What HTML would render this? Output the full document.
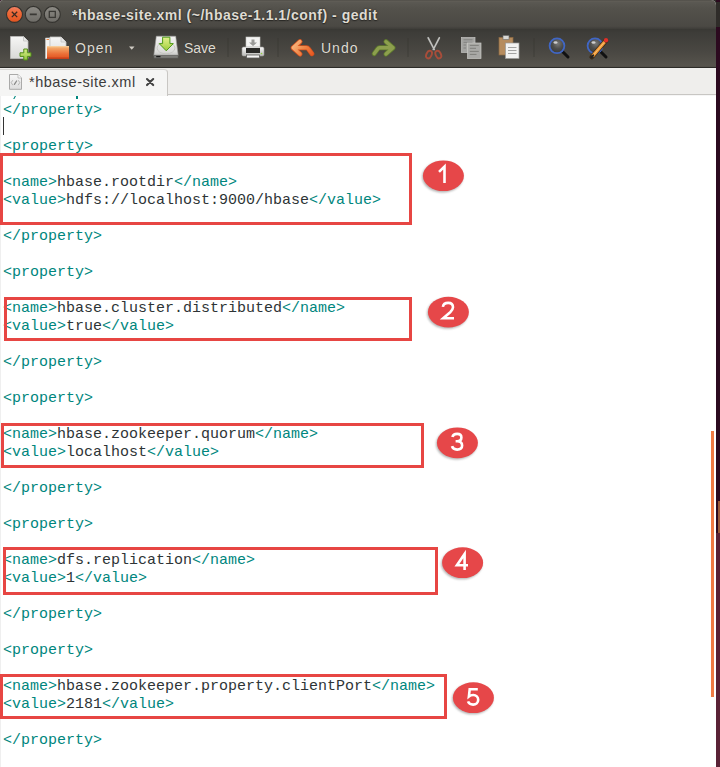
<!DOCTYPE html>
<html><head><meta charset="utf-8">
<style>
*{margin:0;padding:0;box-sizing:border-box}
html,body{width:720px;height:767px;overflow:hidden;background:#2c0a1f}
body{position:relative;font-family:"Liberation Sans",sans-serif}
.abs{position:absolute}
#strip1{left:700px;top:0;width:20px;height:27px;background:#2f2c29}
#strip0{left:716px;top:0;width:4px;height:2px;background:#2c0a1f}
#strip0b{left:0;top:0;width:6px;height:6px;background:#2c0a1f}
#strip2{left:716px;top:27px;width:4px;height:474px;background:#2c0a1f}
#strip3{left:716px;top:501px;width:4px;height:32px;background:#2c0a1f}
#strip3b{left:718px;top:501px;width:2px;height:32px;background:#9a5a3a}
#strip4{left:716px;top:533px;width:4px;height:234px;background:#5a2236}
#win{left:0;top:0;width:716px;height:767px;overflow:hidden;border-radius:3px 5px 0 0;background:#fff}
#title{left:0;top:0;width:716px;height:29px;background:linear-gradient(#4a4843,#615e57 1px,#5a5852 2.5px,#53514b 30%,#4b4944 90%,#3e3d39)}
#toolbar{left:0;top:29px;width:716px;height:39px;background:linear-gradient(#393834,#3d3c38 8%,#4a4843 60%,#57544d 96%,#2c2b27 97.5%)}
#tabbar{left:0;top:68px;width:716px;height:27px;background:#efeeec;border-bottom:1px solid #c8c6c3}
#tabline{left:0;top:95px;width:716px;height:1px;background:#f6f6f6}
#tab{left:0;top:69px;width:168px;height:27px;background:#f5f5f4;border-right:1px solid #c8c6c3;border-top:1px solid #d6d5d2;border-radius:0 4px 0 0}
.wbtn{width:16px;height:16px;border-radius:50%;top:6px}
#close{left:6.5px;background:radial-gradient(circle at 50% 30%,#f58a5c,#e9541f 70%);border:1px solid #2e2d2a}
#min{left:25.5px;background:linear-gradient(#8e8c86,#6c6a65);border:1px solid #2e2d2a}
#max{left:44.5px;background:linear-gradient(#8e8c86,#6c6a65);border:1px solid #2e2d2a}
#ttl{left:72px;top:7px;font-weight:bold;font-size:14px;letter-spacing:0.5px;color:#dfdbd2;text-shadow:0 0 2px #2a2926,0 1px 1px #2a2926;white-space:nowrap}
.tbt{font-size:14px;color:#dfdbd2;white-space:nowrap;top:40px;text-shadow:0 0 1px #2e2d29}
#editor{left:0;top:96px;width:716px;height:671px;overflow:hidden;background:#fff}
#gut{left:0;top:0;width:1px;height:672px;background:#efefef}
pre{position:absolute;left:3px;top:-12px;font-family:"Liberation Mono",monospace;font-size:15px;line-height:18px;color:#2e3436}
.t{color:#00867d}
.box{position:absolute;border:3px solid #e74643}
.num{position:absolute;width:41px;height:31px;border-radius:50%;background:#e2474b;color:#fff;font-size:21px;text-align:center;line-height:31px;box-shadow:-1px 2px 2px rgba(0,0,0,0.35)}
#scroll{left:711px;top:431px;width:3px;height:266px;background:#f07b44}
#cursor{left:3px;top:117px;width:1px;height:18px;background:#333}
</style></head><body>
<div class="abs" id="strip0b"></div>
<div class="abs" id="strip1"></div>
<div class="abs" id="strip0"></div>
<div class="abs" id="strip2"></div>
<div class="abs" id="strip3"></div>
<div class="abs" id="strip3b"></div>
<div class="abs" id="strip4"></div>
<div class="abs" id="win">
  <div class="abs" id="title"></div>
  <div class="abs" id="ttl">*hbase-site.xml (~/hbase-1.1.1/conf) - gedit</div>
  <div class="abs" id="toolbar"></div>
  <div class="abs tbt" style="left:75px;letter-spacing:1px">Open</div>
  <div class="abs tbt" style="left:184px">Save</div>
  <div class="abs tbt" style="left:321px;letter-spacing:1px">Undo</div>

  <svg class="abs" style="left:0;top:0" width="716" height="68" viewBox="0 0 716 68">
    <defs>
      <linearGradient id="gPage" x1="0" y1="0" x2="0" y2="1"><stop offset="0" stop-color="#f6f6f5"/><stop offset="1" stop-color="#d9d9d7"/></linearGradient>
      <linearGradient id="gGreen" x1="0" y1="0" x2="0" y2="1"><stop offset="0" stop-color="#d8ee88"/><stop offset="1" stop-color="#94c440"/></linearGradient>
      <linearGradient id="gFolder" x1="0" y1="0" x2="0" y2="1"><stop offset="0" stop-color="#f9d8a8"/><stop offset="0.15" stop-color="#f3a868"/><stop offset="0.6" stop-color="#ec7038"/><stop offset="1" stop-color="#e0501c"/></linearGradient>
      <linearGradient id="gDrive" x1="0" y1="0" x2="0" y2="1"><stop offset="0" stop-color="#f2f2f1"/><stop offset="0.8" stop-color="#dcdcda"/><stop offset="1" stop-color="#c4c4c2"/></linearGradient>
      <linearGradient id="gPrint" x1="0" y1="0" x2="0" y2="1"><stop offset="0" stop-color="#fafafa"/><stop offset="1" stop-color="#b9b9b6"/></linearGradient>
      <linearGradient id="gUndo" gradientUnits="userSpaceOnUse" x1="293" y1="41" x2="312" y2="55"><stop offset="0" stop-color="#f8c08a"/><stop offset="0.5" stop-color="#f08a4a"/><stop offset="1" stop-color="#e85a22"/></linearGradient>
      <linearGradient id="gRedo" x1="0" y1="0" x2="0" y2="1"><stop offset="0" stop-color="#8eaa55"/><stop offset="1" stop-color="#6a8a38"/></linearGradient>
      <linearGradient id="gClose" x1="0" y1="0" x2="0" y2="1"><stop offset="0" stop-color="#f3836a"/><stop offset="0.35" stop-color="#ef6b3a"/><stop offset="1" stop-color="#e25420"/></linearGradient>
      <linearGradient id="gBtn" x1="0" y1="0" x2="0" y2="1"><stop offset="0" stop-color="#8d8b85"/><stop offset="1" stop-color="#6e6c67"/></linearGradient>
      <linearGradient id="gGreen2" x1="0" y1="0" x2="0" y2="1"><stop offset="0" stop-color="#e2f08e"/><stop offset="0.5" stop-color="#c2e064"/><stop offset="1" stop-color="#98c83a"/></linearGradient>
      <radialGradient id="gGlass" cx="0.55" cy="0.35" r="0.7"><stop offset="0" stop-color="#7a7a78"/><stop offset="0.5" stop-color="#4d4d4b"/><stop offset="1" stop-color="#383836"/></radialGradient>
    </defs>
    <!-- window buttons -->
    <circle cx="14.5" cy="14.4" r="8" fill="url(#gClose)" stroke="#34332f" stroke-width="1.1"/>
    <path d="M11.8 11.7 L17.2 17.1 M17.2 11.7 L11.8 17.1" stroke="#3a2a22" stroke-width="1.3"/>
    <circle cx="33.3" cy="14.4" r="8" fill="url(#gBtn)" stroke="#34332f" stroke-width="1.1"/>
    <path d="M29.8 14.4 H36.8" stroke="#3a3935" stroke-width="1.6"/>
    <circle cx="52.3" cy="14.4" r="8" fill="url(#gBtn)" stroke="#34332f" stroke-width="1.1"/>
    <rect x="49.3" y="11.4" width="6" height="6" fill="none" stroke="#3a3935" stroke-width="1.3"/>
    <!-- new -->
    <path d="M10.5 36.5 H23.5 L28 41 V58.5 H10.5 Z" fill="url(#gPage)" stroke="#bdbdbb" stroke-width="0.8"/>
    <path d="M23.5 36.5 V41 H28" fill="#e9e9e8" stroke="#c2c2c0" stroke-width="0.8"/>
    <path d="M23.8 49 h3.6 v3.8 h3.6 v3.6 h-3.6 v3.6 h-3.6 v-3.6 h-3.8 v-3.6 h3.8 z" fill="url(#gGreen)" stroke="#4f8a18" stroke-width="1"/>
    <!-- open -->
    <path d="M45.5 38 H50 V58.5 H45.5 Z" fill="#f3f3f2" stroke="#c9c9c7" stroke-width="0.6"/>
    <path d="M46.5 39.5 H49" stroke="#ef8a4a" stroke-width="1"/>
    <path d="M50 37 H61 L66 42 V58 H50 Z" fill="url(#gPage)" stroke="#c4c4c2" stroke-width="0.8"/>
    <path d="M61 37 V42 H66" fill="#e6e6e5" stroke="#c4c4c2" stroke-width="0.8"/>
    <path d="M47 46 H69 V59 H47 Z" fill="url(#gFolder)"/>
    <path d="M47 58.2 H69" stroke="#c8401a" stroke-width="1.4"/>
    <path d="M129 46.5 H134.5 L131.75 49.7 Z" fill="#cfcbc3"/>
    <!-- save -->
    <path d="M156.3 36.2 H175.7 L178.2 55.5 H153.8 Z" fill="url(#gDrive)" stroke="#9a9a97" stroke-width="0.6"/>
    <path d="M153.8 55.3 H178.2 V58.2 H153.8 Z" fill="#7c7c79" stroke="#4f4f4d" stroke-width="0.5"/>
    <path d="M156.2 56.6 H160.5" stroke="#1a1a1a" stroke-width="1.2"/>
    <ellipse cx="166" cy="48" rx="9" ry="5.8" fill="none" stroke="#c4c4c1" stroke-width="0.9"/>
    <path d="M162.6 37.2 H169.9 V43.6 H173.3 L166.25 50.8 L159.2 43.6 H162.6 Z" fill="url(#gGreen2)" stroke="#4f9a1a" stroke-width="1"/>
    <!-- separators -->
    <path d="M228 38 V57 M278 38 V57 M408 38 V57 M534 38 V57" stroke="#35342f" stroke-width="1" opacity="0.55"/>
    <!-- print -->
    <rect x="246" y="37" width="14" height="12" fill="#f4f4f3" stroke="#c6c6c4" stroke-width="0.6"/>
    <path d="M251.5 39.5 H254.5 V42.5 H257 L253 46 L249 42.5 H251.5 Z" fill="#9a9a98"/>
    <rect x="242" y="47" width="22" height="9" rx="1.5" fill="url(#gPrint)" stroke="#9c9c99" stroke-width="0.6"/>
    <rect x="246" y="48" width="14" height="5" fill="#2a2a28"/>
    <circle cx="261.5" cy="53.5" r="0.8" fill="#8fd23a"/>
    <rect x="246.5" y="55" width="13" height="3" fill="#f6f6f5" stroke="#5a5a58" stroke-width="0.8"/>
    <!-- undo -->
    <path d="M300 41.6 L293.2 47.8 L300 54 M293.2 47.8 H306.3 Q307.6 47.8 308.4 48.9 L311.8 53.6" fill="none" stroke="#d5501d" stroke-width="5" stroke-linecap="round" stroke-linejoin="round"/>
    <path d="M300 41.6 L293.2 47.8 L300 54 M293.2 47.8 H306.3 Q307.6 47.8 308.4 48.9 L311.8 53.6" fill="none" stroke="url(#gUndo)" stroke-width="3.4" stroke-linecap="round" stroke-linejoin="round"/>
    <!-- redo -->
    <path d="M386 41.7 L393 47.8 L386 54 M393 47.8 H379.8 Q378.5 47.8 377.7 48.9 L374.3 53.6" fill="none" stroke="#5e7a2c" stroke-width="5" stroke-linecap="round" stroke-linejoin="round"/>
    <path d="M386 41.7 L393 47.8 L386 54 M393 47.8 H379.8 Q378.5 47.8 377.7 48.9 L374.3 53.6" fill="none" stroke="#8d9f4e" stroke-width="3.4" stroke-linecap="round" stroke-linejoin="round"/>
    <!-- cut -->
    <path d="M428.2 37.8 L434.2 49.5 M439.3 37.8 L433.3 49.5" stroke="#5a5a58" stroke-width="2.6" stroke-linecap="round" opacity="0.5"/>
    <path d="M428.2 37.8 L434.2 49.5 M439.3 37.8 L433.3 49.5" stroke="#c2c2bf" stroke-width="1.6" stroke-linecap="round"/>
    <ellipse cx="429" cy="54.6" rx="2.6" ry="4" transform="rotate(25 429 54.6)" fill="none" stroke="#a84d3a" stroke-width="1.9"/>
    <ellipse cx="438.3" cy="54.6" rx="2.6" ry="4" transform="rotate(-25 438.3 54.6)" fill="none" stroke="#a84d3a" stroke-width="1.9"/>
    <!-- copy -->
    <rect x="461.5" y="37.5" width="13.5" height="15" fill="#a4a4a1" stroke="#c4c4c1" stroke-width="0.7"/>
    <path d="M463.5 39.8 H472.5 M463.5 42.3 H472.5 M463.5 45 H466 M463.5 48 H466" stroke="#7e7e7b" stroke-width="0.9"/>
    <rect x="467.5" y="43" width="13.5" height="15.5" fill="#a9a9a6" stroke="#cacac7" stroke-width="0.7"/>
    <path d="M469.8 45.4 H478.8 M469.8 48.3 H476 M469.8 51.4 H478.8 M469.8 54.4 H476.5" stroke="#7a7a77" stroke-width="0.9"/>
    <!-- paste -->
    <rect x="499" y="37.5" width="14" height="17.5" fill="#b68c5e" stroke="#8e6a42" stroke-width="0.7"/>
    <rect x="503" y="35.5" width="6" height="4" fill="#d8d8d5" stroke="#6a6a68" stroke-width="0.6"/>
    <rect x="505.5" y="43" width="13.5" height="15.5" fill="#f2f2f1" stroke="#9a9a98" stroke-width="0.7"/>
    <path d="M508 47.5 H516.5 M508 50.5 H516.5 M508 53.5 H516.5" stroke="#9a9a98" stroke-width="0.9"/>
    <!-- find -->
    <path d="M561.5 50.5 L568 57" stroke="#111" stroke-width="3" stroke-linecap="round"/>
    <circle cx="557" cy="45.8" r="7.4" fill="url(#gGlass)" stroke="#4066c4" stroke-width="1.8"/>
    <ellipse cx="555.5" cy="42.5" rx="2" ry="1.2" fill="#e8e8e8" opacity="0.8"/>
    <!-- replace -->
    <path d="M599.5 50.5 L606 57" stroke="#111" stroke-width="3" stroke-linecap="round"/>
    <circle cx="595" cy="45.8" r="7.4" fill="url(#gGlass)" stroke="#4066c4" stroke-width="1.8"/>
    <ellipse cx="593.5" cy="42.5" rx="2" ry="1.2" fill="#e8e8e8" opacity="0.8"/>
    <path d="M591.8 57 L606 40.5" stroke="#3a2a18" stroke-width="4.8" stroke-linecap="round"/>
    <path d="M592.6 56.1 L604.6 42" stroke="#f09a3a" stroke-width="3.2"/>
    <path d="M593.5 55 L604 42.6" stroke="#f8c070" stroke-width="1"/>
    <circle cx="606" cy="40.3" r="2.2" fill="#e0302a"/>
    <path d="M591.6 57.2 L593.2 55.3" stroke="#222" stroke-width="2" stroke-linecap="round"/>
  </svg>
  <div class="abs" id="tabbar"></div>
  <div class="abs" id="tabline"></div>
  <div class="abs" id="tab"></div>
  <svg class="abs" style="left:0;top:68px" width="30" height="28" viewBox="0 68 30 28">
    <defs><linearGradient id="gTi" x1="0" y1="0" x2="0" y2="1"><stop offset="0" stop-color="#f7f7f7"/><stop offset="1" stop-color="#dedede"/></linearGradient></defs>
    <path d="M9.5 74.5 H18 L21.5 78 V89.3 H9.5 Z" fill="url(#gTi)" stroke="#aaaaa9" stroke-width="1"/>
    <path d="M18 74.5 V78 H21.5" fill="#fbfbfb" stroke="#b5b5b4" stroke-width="0.8"/>
    <path d="M12.8 80.2 L11.2 82.6 L12.8 85.2 M18.2 80.2 L19.8 82.6 L18.2 85.2" fill="none" stroke="#b0b0af" stroke-width="0.9"/>
    <path d="M14.4 84.4 L16.6 81" stroke="#8a8a89" stroke-width="1.3" stroke-linecap="round"/>
  </svg>
  <div class="abs" style="left:29px;top:74px;font-size:14.5px;letter-spacing:0.5px;color:#3c3c3c">*hbase-site.xml</div>
  <svg class="abs" style="left:140px;top:72px" width="20" height="20" viewBox="140 72 20 20"><path d="M147 79 L153.2 85.1 M153.2 79 L147 85.1" stroke="#434343" stroke-width="2.1" stroke-linecap="round"/></svg>
  <div class="abs" id="editor">
    <div class="abs" id="gut"></div>
    <svg class="abs" style="left:0;top:0" width="100" height="4"><path d="M13.2 3 L14.8 0 H16 L14.4 3 Z" fill="#00867d"/><rect x="76" y="0" width="2" height="3" fill="#00867d"/></svg>
<pre>

<span class="t">&lt;/property&gt;</span>

<span class="t">&lt;property&gt;</span>

<span class="t">&lt;name&gt;</span>hbase.rootdir<span class="t">&lt;/name&gt;</span>
<span class="t">&lt;value&gt;</span>hdfs://localhost:9000/hbase<span class="t">&lt;/value&gt;</span>

<span class="t">&lt;/property&gt;</span>

<span class="t">&lt;property&gt;</span>

<span class="t">&lt;name&gt;</span>hbase.cluster.distributed<span class="t">&lt;/name&gt;</span>
<span class="t">&lt;value&gt;</span>true<span class="t">&lt;/value&gt;</span>

<span class="t">&lt;/property&gt;</span>

<span class="t">&lt;property&gt;</span>

<span class="t">&lt;name&gt;</span>hbase.zookeeper.quorum<span class="t">&lt;/name&gt;</span>
<span class="t">&lt;value&gt;</span>localhost<span class="t">&lt;/value&gt;</span>

<span class="t">&lt;/property&gt;</span>

<span class="t">&lt;property&gt;</span>

<span class="t">&lt;name&gt;</span>dfs.replication<span class="t">&lt;/name&gt;</span>
<span class="t">&lt;value&gt;</span>1<span class="t">&lt;/value&gt;</span>

<span class="t">&lt;/property&gt;</span>

<span class="t">&lt;property&gt;</span>

<span class="t">&lt;name&gt;</span>hbase.zookeeper.property.clientPort<span class="t">&lt;/name&gt;</span>
<span class="t">&lt;value&gt;</span>2181<span class="t">&lt;/value&gt;</span>

<span class="t">&lt;/property&gt;</span>
</pre>
  </div>
  <div class="abs" id="cursor"></div>
  <div class="abs" id="scroll"></div>
  <div class="box" style="left:0;top:153px;width:412px;height:72px"></div>
  <div class="box" style="left:4px;top:297px;width:408px;height:44px"></div>
  <div class="box" style="left:1px;top:423px;width:423px;height:45px"></div>
  <div class="box" style="left:3px;top:547px;width:435px;height:48px"></div>
  <div class="box" style="left:0;top:674px;width:447px;height:45px"></div>
  <svg class="abs" style="left:0;top:0" width="716" height="767" viewBox="0 0 716 767">
    <defs><filter id="sh" x="-20%" y="-20%" width="140%" height="140%"><feGaussianBlur stdDeviation="0.9"/></filter></defs>
    <ellipse cx="442.5" cy="177.05" rx="20.5" ry="15.35" fill="#555" opacity="0.45" filter="url(#sh)"/>
    <ellipse cx="443.4" cy="175.75" rx="20.5" ry="15.35" fill="#e64749"/>
    <path transform="translate(428 160)" d="M11 11.9 L16.5 6.6 V23.1" fill="none" stroke="#fff" stroke-width="2.6"/>
    <ellipse cx="447.5" cy="313.40000000000003" rx="20.5" ry="15.35" fill="#555" opacity="0.45" filter="url(#sh)"/>
    <ellipse cx="448.4" cy="312.1" rx="20.5" ry="15.35" fill="#e64749"/>
    <path transform="translate(432 296)" d="M10.9 10.9 C11.2 8.1 13.5 6.9 16.2 6.9 C19.1 6.9 21 8.7 21 11.3 C21 13.3 19.9 14.6 18.2 16.2 L11.2 22.3 H22" fill="none" stroke="#fff" stroke-width="2.6"/>
    <ellipse cx="456.5" cy="444.1" rx="20.5" ry="15.35" fill="#555" opacity="0.45" filter="url(#sh)"/>
    <ellipse cx="457.4" cy="442.8" rx="20.5" ry="15.35" fill="#e64749"/>
    <path transform="translate(441 427)" d="M11.4 10 C12 7.8 14 6.9 16.1 6.9 C18.8 6.9 20.4 8.5 20.4 10.6 C20.4 12.8 18.7 14.3 16.1 14.3 H14.6 M16.1 14.3 C19.2 14.3 21.1 16 21.1 18.5 C21.1 21 19.1 22.6 16.1 22.6 C13.4 22.6 11.6 21.3 11 19.2" fill="none" stroke="#fff" stroke-width="2.6"/>
    <ellipse cx="461.70000000000005" cy="564.0" rx="20.5" ry="15.35" fill="#555" opacity="0.45" filter="url(#sh)"/>
    <ellipse cx="462.6" cy="562.7" rx="20.5" ry="15.35" fill="#e64749"/>
    <path transform="translate(446 547)" d="M22 18.3 H10.9 L18.6 6.9 V23.1" fill="none" stroke="#fff" stroke-width="2.6"/>
    <ellipse cx="472.5" cy="699.0" rx="20.5" ry="15.35" fill="#555" opacity="0.45" filter="url(#sh)"/>
    <ellipse cx="473.4" cy="697.7" rx="20.5" ry="15.35" fill="#e64749"/>
    <path transform="translate(457 682)" d="M20.8 7.2 H12.7 L11.9 14.4 C13.1 13.4 14.6 13 16.2 13 C19.2 13 21.2 15 21.2 17.8 C21.2 20.7 19 22.6 16.1 22.6 C13.6 22.6 11.7 21.4 11 19.4" fill="none" stroke="#fff" stroke-width="2.6"/>
  </svg>
</div>
</body></html>
